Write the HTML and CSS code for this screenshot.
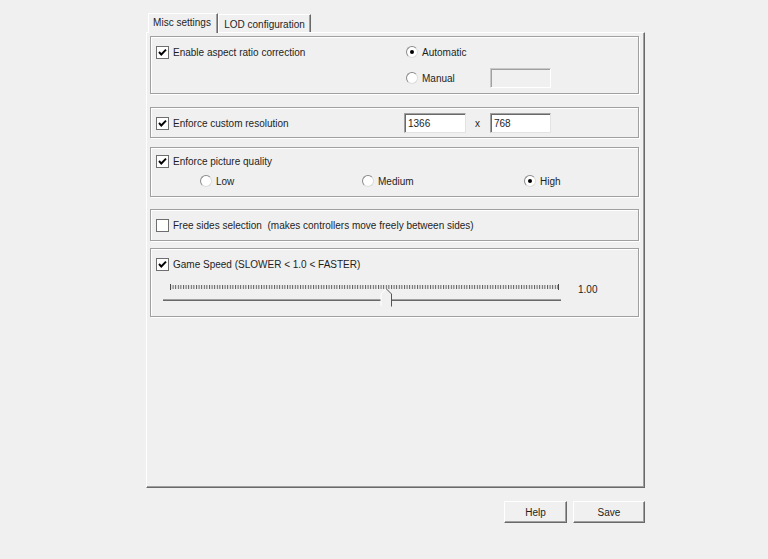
FILE: index.html
```html
<!DOCTYPE html>
<html>
<head>
<meta charset="utf-8">
<link rel="stylesheet" href="styles.css">
</head>
<body>
<div class="dialog">
  <div class="tabs">
    <div class="tab active">Misc settings</div>
    <div class="tab inactive">LOD configuration</div>
  </div>
  <div class="panel">
    <div class="group g1">
      <label class="check"><span class="box on"><svg viewBox="0 0 11 11" width="11" height="11"><path d="M2 5 L4.3 7.5 L9 2.6" fill="none" stroke="#000" stroke-width="1.9"/></svg></span>Enable aspect ratio correction</label>
      <label class="radio"><span class="dot on"></span>Automatic</label>
      <span></span>
      <span></span>
      <label class="radio"><span class="dot"></span>Manual</label>
      <span class="field disabled"></span>
    </div>
    <div class="group g2">
      <label class="check"><span class="box on"><svg viewBox="0 0 11 11" width="11" height="11"><path d="M2 5 L4.3 7.5 L9 2.6" fill="none" stroke="#000" stroke-width="1.9"/></svg></span>Enforce custom resolution</label>
      <span class="field">1366</span>
      <span class="times">x</span>
      <span class="field">768</span>
    </div>
    <div class="group g3">
      <label class="check"><span class="box on"><svg viewBox="0 0 11 11" width="11" height="11"><path d="M2 5 L4.3 7.5 L9 2.6" fill="none" stroke="#000" stroke-width="1.9"/></svg></span>Enforce picture quality</label>
      <div class="quality">
        <label class="radio"><span class="dot"></span>Low</label>
        <label class="radio"><span class="dot"></span>Medium</label>
        <label class="radio"><span class="dot on"></span>High</label>
      </div>
    </div>
    <div class="group g4">
      <label class="check"><span class="box"></span>Free sides selection&nbsp; (makes controllers move freely between sides)</label>
    </div>
    <div class="group g5">
      <label class="check"><span class="box on"><svg viewBox="0 0 11 11" width="11" height="11"><path d="M2 5 L4.3 7.5 L9 2.6" fill="none" stroke="#000" stroke-width="1.9"/></svg></span>Game Speed (SLOWER &lt; 1.0 &lt; FASTER)</label>
      <div class="slider-row">
        <svg class="slider" width="400" height="28" viewBox="0 0 400 28">
          <defs>
            <pattern id="ticks" x="7" y="0" width="2.6" height="28" patternUnits="userSpaceOnUse">
              <rect x="0" y="4" width="1" height="4" fill="#5a5a5a"/>
            </pattern>
          </defs>
          <rect x="7" y="0" width="388" height="28" fill="url(#ticks)"/>
          <rect x="7" y="3" width="1" height="6" fill="#4a4a4a"/>
          <rect x="395" y="3" width="1" height="6" fill="#4a4a4a"/>
          <rect x="0" y="18" width="398" height="1" fill="#a0a0a0"/>
          <rect x="0" y="19" width="398" height="1" fill="#696969"/>
          <path d="M218 13 L223 8 L228 13 L228 25 L218 25 Z" fill="#f0f0f0"/>
          <path d="M218 25 L218 13 L223 8" fill="none" stroke="#ffffff" stroke-width="1"/>
          <path d="M223.5 8 L228.5 13 L228.5 25.5" fill="none" stroke="#555" stroke-width="1"/>
        </svg>
        <span class="value">1.00</span>
      </div>
    </div>
  </div>
  <div class="buttons">
    <button class="btn help">Help</button>
    <button class="btn save">Save</button>
  </div>
</div>
</body>
</html>
```
FILE: styles.css
```css
* { box-sizing: border-box; }
html, body { margin: 0; padding: 0; }
body {
  background: #f0f0f0;
  font-family: "Liberation Sans", Arial, sans-serif;
  font-size: 10px;
  color: #1e1e1e;
  width: 768px;
  height: 559px;
  overflow: hidden;
}
.dialog {
  width: 499px;
  margin-left: 146px;
  padding-top: 13px;
}
.tabs {
  display: flex;
  align-items: flex-end;
  height: 19px;
  padding-left: 2px;
  position: relative;
  z-index: 1;
}
.tab {
  height: 18px;
  line-height: 17px;
  text-align: center;
  border-left: 1px solid #ffffff;
  border-top: 1px solid #ffffff;
  border-right: 1px solid #696969;
  box-shadow: inset -1px 0 #a0a0a0;
  background: #f0f0f0;
  white-space: nowrap;
}
.tab.active {
  width: 70px;
  height: 20px;
  line-height: 18px;
  margin-bottom: -1px;
  padding-right: 2px;
}
.tab.inactive {
  width: 93px;
  line-height: 19px;
}
.panel {
  height: 456px;
  border-top: 1px solid #ffffff;
  border-left: 1px solid #ffffff;
  border-right: 1px solid #696969;
  border-bottom: 1px solid #696969;
  box-shadow: inset -1px -1px #a0a0a0;
  padding: 3px 0 0 3px;
}
.group {
  width: 489px;
  border: 1px solid #a0a0a0;
  box-shadow: inset 1px 1px #ffffff, 1px 1px #ffffff;
  padding-left: 5px;
}
.check, .radio {
  display: flex;
  align-items: center;
  height: 16px;
  white-space: nowrap;
}
.box {
  width: 13px;
  height: 13px;
  flex: none;
  background: #fff;
  border: 1px solid #6e6e6e;
  margin-right: 4px;
  display: flex;
  align-items: center;
  justify-content: center;
}
.box svg { display: block; }
.dot {
  width: 12px;
  height: 12px;
  flex: none;
  border-radius: 50%;
  background: #fff;
  border: 1px solid;
  border-color: #8a8a8a #dcdcdc #dcdcdc #8a8a8a;
  margin-right: 4px;
  display: flex;
  align-items: center;
  justify-content: center;
}
.dot.on::after {
  content: "";
  width: 4px;
  height: 4px;
  border-radius: 50%;
  background: #000;
}
.field {
  display: block;
  height: 20px;
  background: #fff;
  border: 1px solid;
  border-color: #a0a0a0 #e3e3e3 #e3e3e3 #a0a0a0;
  box-shadow: inset 1px 1px #696969;
  padding: 2px 0 0 3px;
  line-height: 15px;
}
.field.disabled {
  background: #f0f0f0;
  box-shadow: inset 1px 1px #a0a0a0;
  border-color: #c8c8c8 #ffffff #ffffff #c8c8c8;
}

.g1 {
  height: 58px;
  margin-bottom: 13px;
  padding-top: 7px;
  display: grid;
  grid-template-columns: 250px 84px 61px;
  grid-template-rows: 16px 20px;
  row-gap: 8px;
  align-items: center;
}
.g2 {
  height: 31px;
  margin-bottom: 9px;
  padding-top: 5px;
  display: grid;
  grid-template-columns: 248px 62px 24px 61px;
  grid-template-rows: 20px;
  align-items: center;
}
.times { padding-left: 9px; }
.g3 {
  height: 50px;
  margin-bottom: 12px;
  padding-top: 5px;
}
.quality {
  display: flex;
  margin-top: 4px;
  padding-left: 44px;
}
.quality .radio { width: 162px; flex: none; }
.quality .radio:last-child { width: auto; }
.g4 {
  height: 32px;
  margin-bottom: 7px;
  padding-top: 7px;
}
.g5 {
  height: 69px;
  padding-top: 7px;
}
.slider-row {
  display: flex;
  align-items: flex-start;
  margin-top: 9px;
  padding-left: 7px;
}
.slider { display: block; flex: none; }
.value {
  margin-left: 15px;
  margin-top: 2px;
  line-height: 14px;
}
.buttons {
  display: flex;
  justify-content: flex-end;
  gap: 6px;
  margin-top: 13px;
}
.btn {
  height: 22px;
  font: inherit;
  color: #1e1e1e;
  background: #f0f0f0;
  border: 1px solid;
  border-color: #ffffff #696969 #696969 #ffffff;
  box-shadow: inset -1px -1px #a0a0a0;
  padding: 0;
}
.help { width: 63px; }
.save { width: 72px; }
```
